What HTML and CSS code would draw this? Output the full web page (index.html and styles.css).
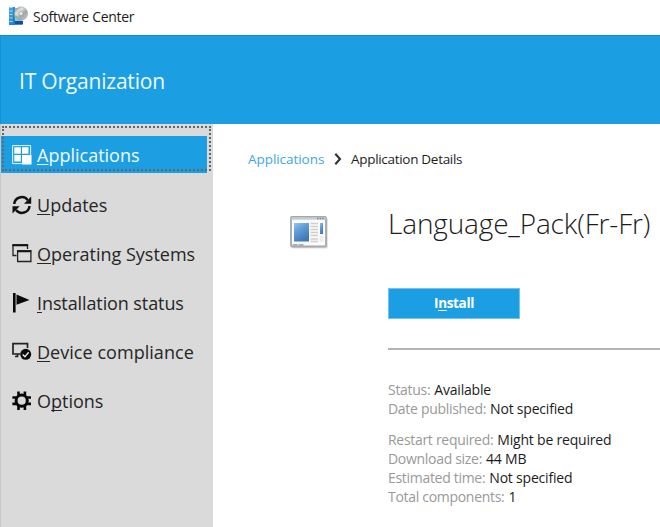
FILE: index.html
```
<!DOCTYPE html>
<html lang="en">
<head>
<meta charset="utf-8">
<title>Software Center</title>
<link rel="stylesheet" href="styles.css">
</head>
<body>
<header class="titlebar">
  <svg class="app-icon" width="20" height="20" viewBox="0 0 20 20">
    <defs>
      <linearGradient id="disc" x1="0" y1="0" x2="1" y2="1"><stop offset="0" stop-color="#8d9294"/><stop offset=".35" stop-color="#dfe1de"/><stop offset=".6" stop-color="#a3a7a6"/><stop offset="1" stop-color="#c9cbc8"/></linearGradient>
      <linearGradient id="box" x1="0" y1="0" x2="0" y2="1"><stop offset="0" stop-color="#4aa5e2"/><stop offset="1" stop-color="#2483d2"/></linearGradient>
    </defs>
    <path d="M1 1h6v18H1z" fill="url(#box)"/>
    <path d="M7 2h7v17H7z" fill="#8fc4ea"/>
    <path d="M1.500 1.500h3M1.500 5h3M1.500 8.500h3M1.500 12h3M1.500 15.500h3" stroke="#a7dcf8"/>
    <path d="M6 1v18" stroke="#1c70bd"/>
    <path d="M7 15h8v3.500H7z" fill="#104da5"/>
    <circle cx="13" cy="7.500" r="6.600" fill="url(#disc)" stroke="#9b9fa0" stroke-width=".6"/>
    <circle cx="13" cy="7.500" r="2" fill="#eee" stroke="#999" stroke-width=".7"/>
    <path d="M6.500 10l3 1" stroke="#74c96b" stroke-width="1.500"/>
  </svg>
  <span class="window-title">Software Center</span>
</header>
<div class="banner"><span class="org">IT Organization</span></div>
<div class="body">
  <nav class="sidebar">
    <a class="item active">
      <svg class="icon" viewBox="0 0 20 20"><path d="M.6.6h18v18h-18z" fill="none" stroke="#fff" stroke-width=".9"/><path d="M2.300 2.300h6.500v6.500H2.300zM10 2.300h6.500v6.500H10zM2.300 10h6.500v6.500H2.300zM10 10h9.500v9.500H10z" fill="#fff"/></svg>
      <span class="label">Applications</span>
    </a>
    <a class="item">
      <svg class="icon" viewBox="0 0 20 20"><path d="M2.200 9a7.600 7.600 0 0 1 13.500-4M17.500 11a7.600 7.600 0 0 1-13.500 4" fill="none" stroke="#111" stroke-width="2.500"/><path d="M19.200 1.500v7.200H12zM.5 18.500v-7.200h7.200z" fill="#111"/></svg>
      <span class="label"><u>U</u>pdates</span>
    </a>
    <a class="item">
      <svg class="icon" viewBox="0 0 20 20"><path d="M4.500 11.500H1V1h14.500v4" fill="none" stroke="#222" stroke-width="1.300"/><path d="M.4 1.200h15.700M5.200 7.200h14" stroke="#111" stroke-width="2"/><path d="M5.600 6.700h13.300v10.800H5.600z" fill="none" stroke="#222" stroke-width="1.300"/></svg>
      <span class="label"><u>O</u>perating Systems</span>
    </a>
    <a class="item">
      <svg class="icon" viewBox="0 0 20 20"><path d="M1 0h2.600v19.500H1zM4.500 1.500L17.500 7 4.500 11.800z" fill="#080808"/></svg>
      <span class="label installation"><u>I</u>nstallation status</span>
    </a>
    <a class="item">
      <svg class="icon" viewBox="0 0 20 20"><path d="M8 12H1V1.700h14.500V6M5.500 12v2.500H3" fill="none" stroke="#222" stroke-width="1.700"/><circle cx="13.700" cy="12.300" r="5.500" fill="#0b0b0b"/><path d="M10.700 12.400l2.200 2.300 3.800-4.500" fill="none" stroke="#e8e8e8" stroke-width="1.400"/></svg>
      <span class="label compliance"><u>D</u>evice compliance</span>
    </a>
    <a class="item">
      <svg class="icon" viewBox="0 0 20 20"><circle cx="9.700" cy="9.700" r="5.600" fill="none" stroke="#080808" stroke-width="3"/><path d="M6.500.4v4M12.900.4v4M6.500 15v4M12.900 15v4M.4 6.500h4M.4 12.900h4M15 6.500h4M15 12.900h4" stroke="#080808" stroke-width="2.600"/></svg>
      <span class="label">O<u>p</u>tions</span>
    </a>
  </nav>
  <main class="content">
    <div class="breadcrumb">
      <a class="crumb-link">Applications</a>
      <svg class="chevron" width="8" height="12" viewBox="0 0 8 12"><path d="M1.300.8L6 6l-4.700 5.200" fill="none" stroke="#333" stroke-width="2.100"/></svg>
      <span class="crumb-current">Application Details</span>
    </div>
    <div class="details">
      <svg class="package" width="40" height="34" viewBox="0 0 40 34">
        <defs><linearGradient id="blue" x1="0" y1="0" x2=".5" y2="1"><stop offset="0" stop-color="#8cc8ef"/><stop offset=".4" stop-color="#62a0d9"/><stop offset="1" stop-color="#3e78b9"/></linearGradient></defs>
        <rect x="1.800" y="2" width="36" height="30.500" rx="1.500" fill="#ddd"/>
        <rect x="1" y="1" width="35" height="29.500" rx="1" fill="#fafafa" stroke="#a4a7ae" stroke-width="1.800"/>
        <path d="M1.500 2.500h34" stroke="#c8ccd4" stroke-width="2.500"/>
        <path d="M27 2.500h7" stroke="#7f8799" stroke-width="1.300" stroke-dasharray="1.600 1"/>
        <path d="M2.500 28.800h11" stroke="#8b93a3" stroke-width="1.200" stroke-dasharray="5 1"/>
        <path d="M4 7h15v18.500H4z" fill="url(#blue)"/>
        <path d="M20.500 7.500h7.500M20.500 10.500h7.500M20.500 13.500h7.500M20.500 16.500h7.500M20.500 19.500h7.500M20.500 23h7.500M20.500 25.500h7.500" stroke="#cfcfcf" stroke-width="1.300"/>
        <path d="M30 7h3v11h-3z" fill="url(#blue)"/><path d="M29.500 20h4v5.500h-4z" fill="#ececec"/>
      </svg>
      <section class="info">
        <h1 class="title">Language_Pack(Fr-Fr)</h1>
        <button class="install"><span>I<u>n</u>stall</span></button>
        <hr class="rule">
        <dl class="facts">
          <div class="fact"><dt>Status:</dt><dd>Available</dd></div>
          <div class="fact"><dt>Date published:</dt><dd>Not specified</dd></div>
        </dl>
        <dl class="facts">
          <div class="fact"><dt>Restart required:</dt><dd>Might be required</dd></div>
          <div class="fact"><dt>Download size:</dt><dd>44 MB</dd></div>
          <div class="fact"><dt>Estimated time:</dt><dd>Not specified</dd></div>
          <div class="fact"><dt>Total components:</dt><dd>1</dd></div>
        </dl>
      </section>
    </div>
  </main>
</div>
</body>
</html>
```
FILE: styles.css
```
*, *::after { box-sizing: border-box; }
body { margin: 0; height: 527px; overflow: hidden; background: #fff; color: #222; font-family: "Open Sans", "Noto Sans", sans-serif; display: flex; flex-direction: column; }
span, dt, dd, h1, .crumb-link { white-space: nowrap; }
u { text-decoration-thickness: 1px; text-underline-offset: 2px; text-decoration-skip-ink: none; }

.titlebar { height: 35px; flex: none; display: flex; align-items: center; padding: 0 0 3px 8px; gap: 5px; }
.app-icon { flex: none; }
.window-title { font-size: 14px; letter-spacing: -.28px; color: #1c1c1c; }
.banner { height: 89px; flex: none; background: #1c9fe2; border-top: 1px solid #178bc8; border-left: 1px solid #1791d0; padding: 30px 0 0 18px; color: #eef8fe; }
.org { display: block; font-size: 21px; line-height: 30px; letter-spacing: -.2px; }

.body { flex: 1; display: flex; min-height: 0; }
.sidebar { width: 213px; flex: none; background: #dadada; border-left: 1px solid #c8c8c8; padding-top: 12px; display: flex; flex-direction: column; }
.item { flex: none; display: flex; align-items: center; height: 37px; margin-bottom: 12px; padding: 0 0 0 11px; gap: 5px; position: relative; font-size: 18px; color: #262626; }
.active { width: 206px; margin-bottom: 13px; background: #1c9fe2; color: #f3faff; }
.active .label::first-letter { text-decoration: underline 1px; text-underline-offset: 2px; }
.active::after { content: ""; position: absolute; left: 1px; top: -10px; width: 209px; height: 45px; border: 2px dotted #666; }
.icon { width: 20px; height: 20px; flex: none; }
.label { display: block; padding-top: 1px; letter-spacing: 0; }
.installation { letter-spacing: -.1px; }
.compliance { letter-spacing: .04px; }

.content { flex: 1; min-width: 0; padding: 24px 0 0 35px; }
.breadcrumb { display: flex; align-items: center; height: 22px; font-size: 13.5px; }
.crumb-link { color: #3ea7e4; letter-spacing: -.05px; width: 78px; }
.chevron { margin: 0 9px 0 8px; }
.crumb-current { color: #1e1e1e; font-weight: 500; letter-spacing: -.3px; }
.details { display: flex; padding-left: 42px; }
.package { flex: none; margin: 46px 58px 0 0; }
.info { flex: 1; min-width: 0; padding-top: 33px; }
.title { margin: 0; font-size: 28px; line-height: 40px; font-weight: 300; letter-spacing: -.15px; color: #1c1c1c; }
.install { display: block; margin: 45px 0 0; width: 132px; height: 31px; padding: 0; border: 1px solid #70c4f0; background: #1c9fe2; color: #fff; font: 700 13.5px/29px "Open Sans", sans-serif; letter-spacing: -.35px; }
.rule { margin: 29px 0 0; border: 0; height: 2px; background: #b4b4b4; }
.facts { margin: 30px 0 0; font-size: 14px; line-height: 19px; }
.facts + .facts { margin-top: 12px; }
.fact { display: flex; gap: 4px; height: 19px; }
dt { color: #999; letter-spacing: -.3px; }
dd { margin: 0; color: #1c1c1c; font-weight: 500; letter-spacing: -.2px; }
```
